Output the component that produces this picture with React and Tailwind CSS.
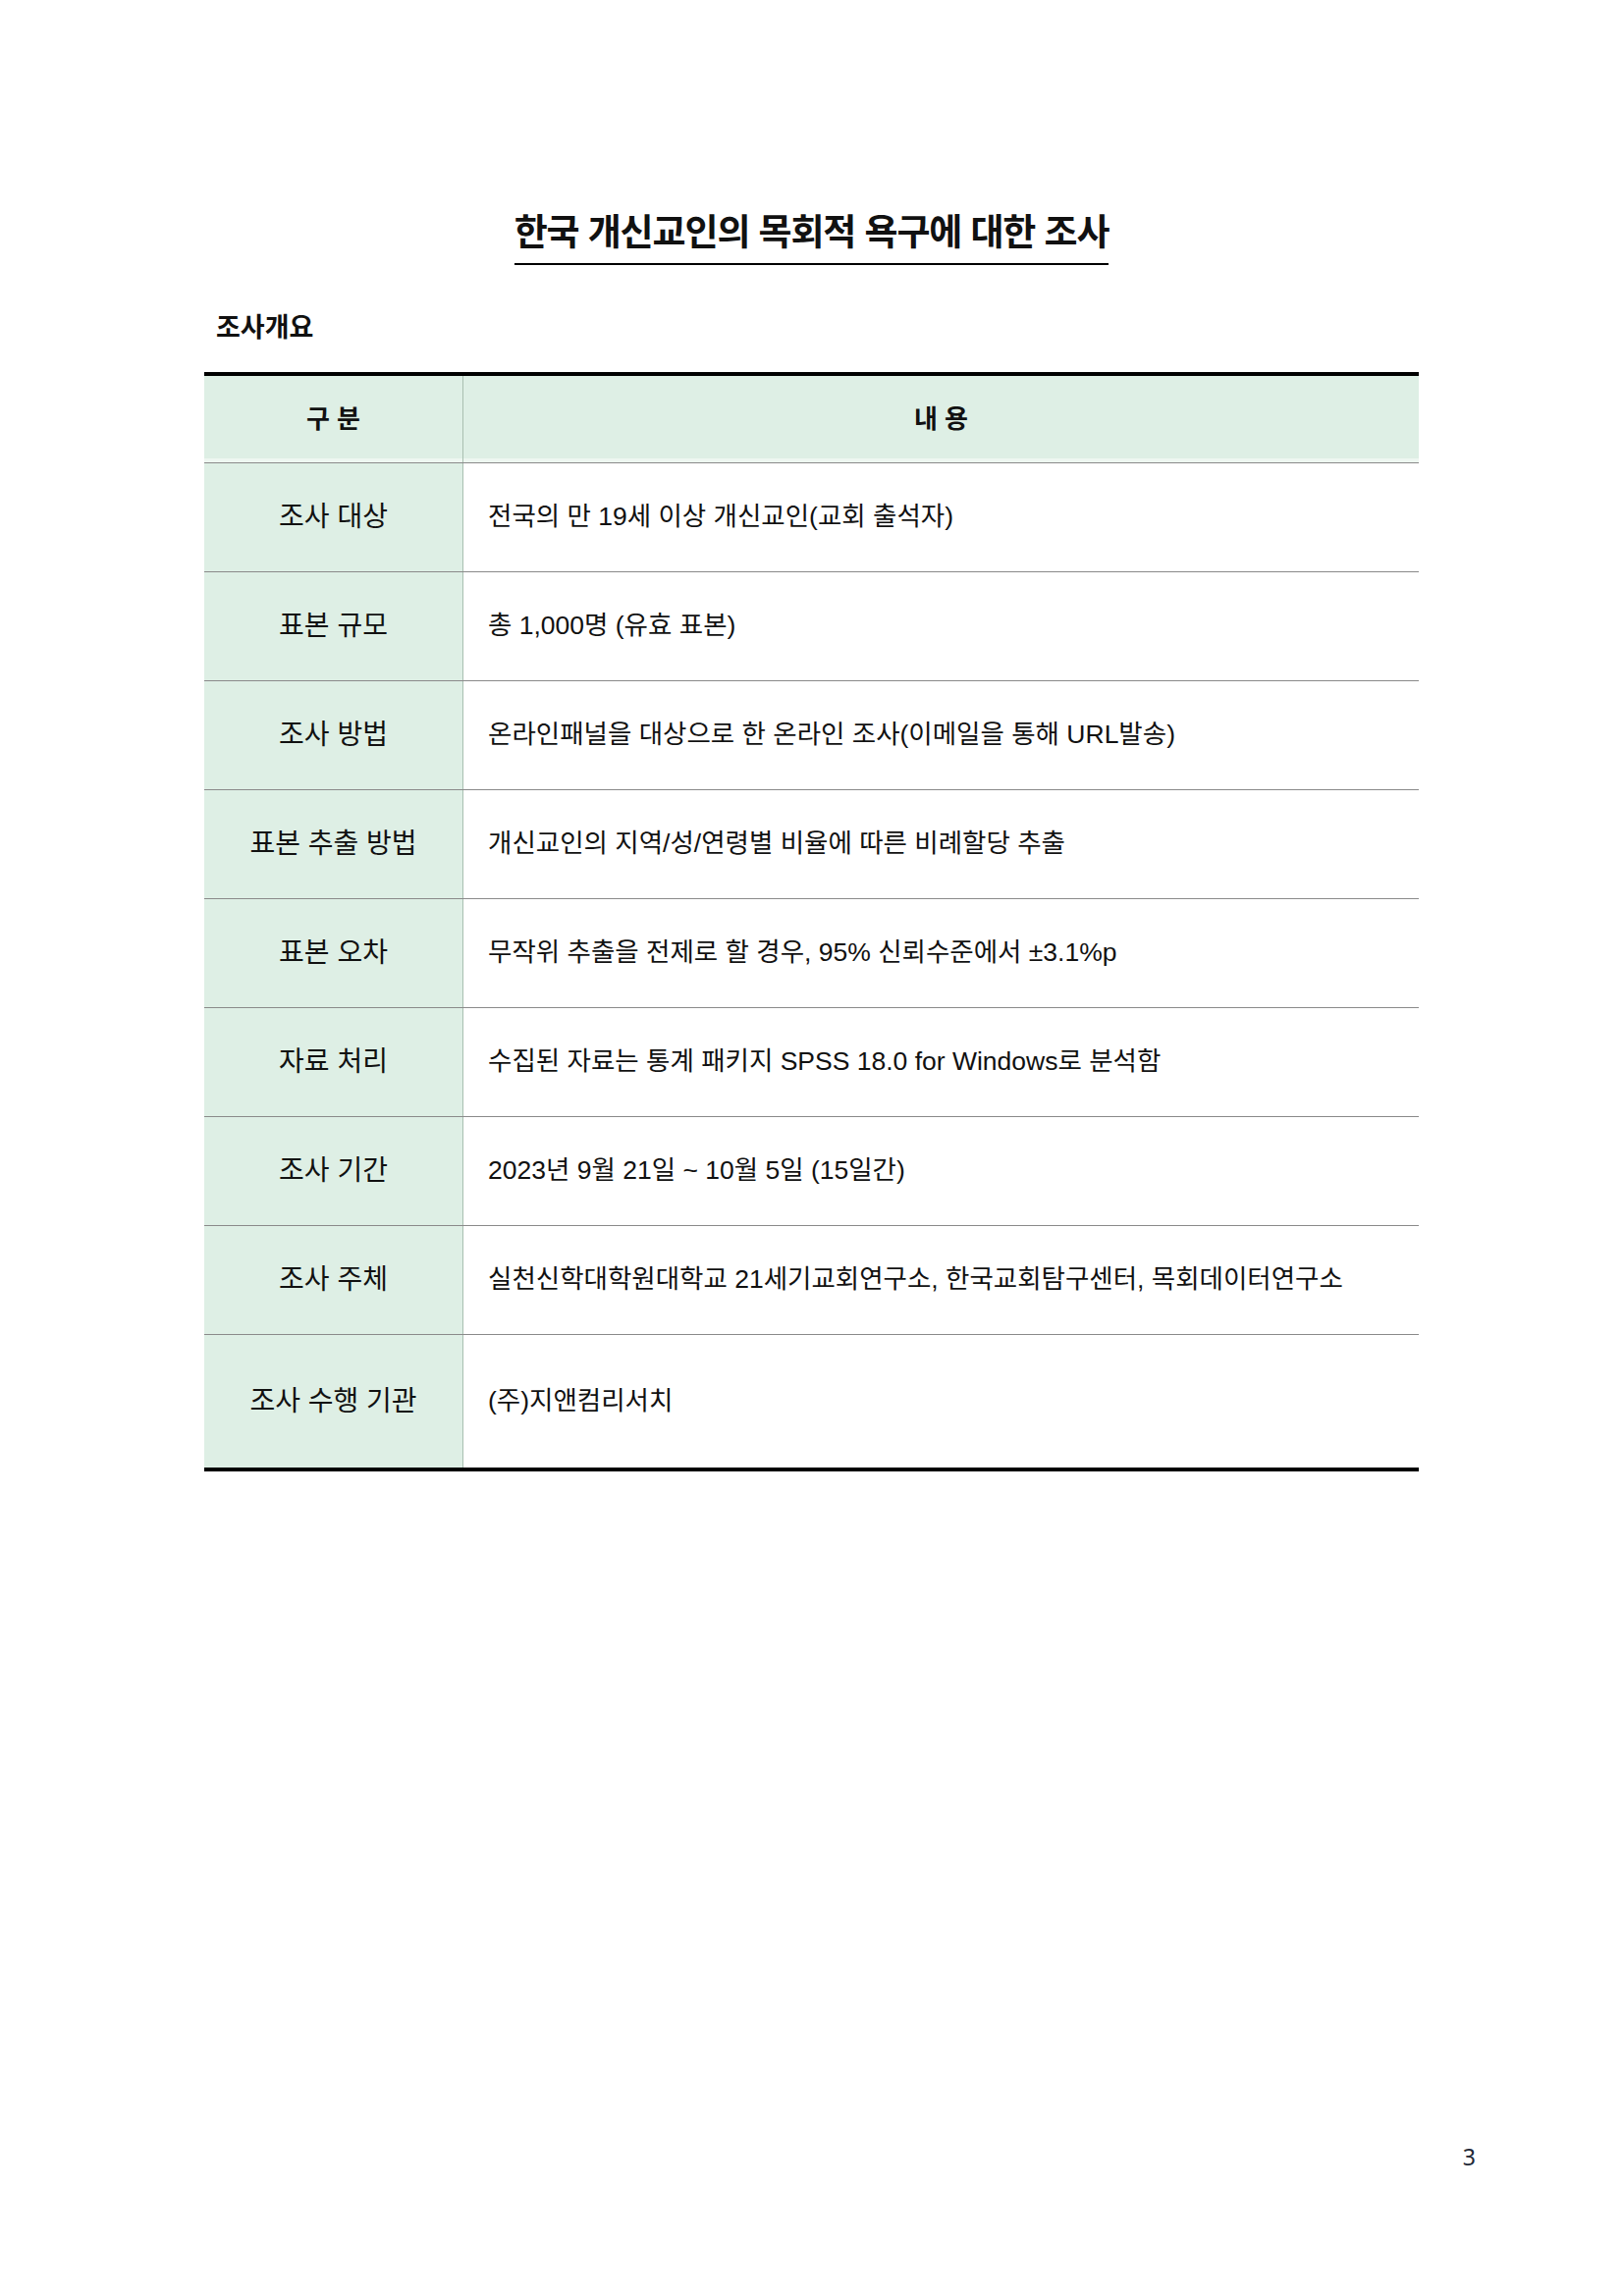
import React from 'react';

const rows = [
  ['조사 대상', '전국의 만 19세 이상 개신교인(교회 출석자)'],
  ['표본 규모', '총 1,000명 (유효 표본)'],
  ['조사 방법', '온라인패널을 대상으로 한 온라인 조사(이메일을 통해 URL발송)'],
  ['표본 추출 방법', '개신교인의 지역/성/연령별 비율에 따른 비례할당 추출'],
  ['표본 오차', '무작위 추출을 전제로 할 경우, 95% 신뢰수준에서 ±3.1%p'],
  ['자료 처리', '수집된 자료는 통계 패키지 SPSS 18.0 for Windows로 분석함'],
  ['조사 기간', '2023년 9월 21일 ~ 10월 5일 (15일간)'],
  ['조사 주체', '실천신학대학원대학교 21세기교회연구소, 한국교회탐구센터, 목회데이터연구소'],
];

function App() {
  return (
    <div className="w-[1653px] h-[2339px] bg-white text-[#111] font-['Liberation_Sans','Noto_Sans_CJK_KR',sans-serif] flex flex-col px-[208px]">
      {/* title */}
      <div className="flex justify-center mt-[219px]">
        <h1 className="text-[37px] leading-none font-bold tracking-[-0.03em] pb-[12px] border-b-2 border-black">
          한국 개신교인의 목회적 욕구에 대한 조사
        </h1>
      </div>

      <p className="text-[27px] leading-none font-bold ml-[12px] mt-[51px]">조사개요</p>

      {/* table */}
      <div className="mt-[31px] border-t-4 border-b-4 border-black">
        <div className="flex h-[89px] bg-[#deefe5] border-b border-[#8a8a8a] shadow-[inset_0_-4px_0_#eef7f1]">
          <div className="w-[264px] flex items-center justify-center border-r border-[#a9bfb1] text-[26px] font-bold">
            구 분
          </div>
          <div className="flex-1 flex items-center justify-center text-[26px] font-bold">내 용</div>
        </div>
        {rows.map(([k, v]) => (
          <div key={k} className="flex h-[111px] border-b border-[#8a8a8a]">
            <div className="w-[264px] bg-[#deefe5] flex items-center justify-center border-r border-[#a9bfb1] text-[28px]">
              {k}
            </div>
            <div className="flex-1 flex items-center pl-[25px] text-[26.5px]">{v}</div>
          </div>
        ))}
        <div className="flex h-[135px]">
          <div className="w-[264px] bg-[#deefe5] flex items-center justify-center border-r border-[#a9bfb1] text-[28px]">
            조사 수행 기관
          </div>
          <div className="flex-1 flex items-center pl-[25px] text-[26.5px]">(주)지앤컴리서치</div>
        </div>
      </div>

      <div className="mt-auto mb-[125px] flex justify-end -mr-[58px]">
        <span className="text-[23px] text-[#1f2937] font-['Noto_Sans',sans-serif]">3</span>
      </div>
    </div>
  );
}

export default App;
